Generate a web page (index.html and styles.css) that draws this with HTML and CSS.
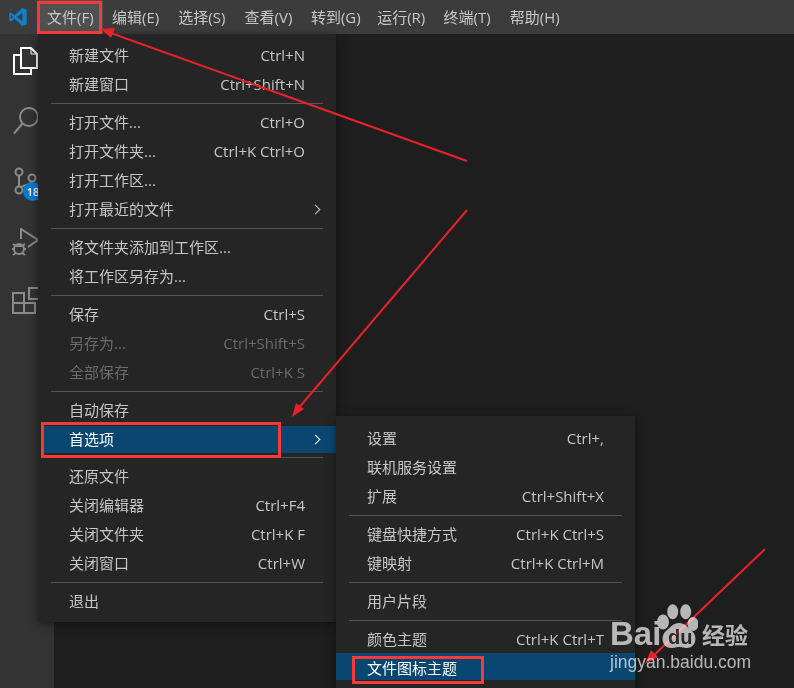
FILE: index.html
```html
<!DOCTYPE html>
<html lang="zh-CN">
<head>
<meta charset="utf-8">
<title>Visual Studio Code</title>
<link rel="stylesheet" href="styles.css">
</head>
<body>
<div class="app">
  <header class="titlebar">
    <svg class="logo" viewBox="0 0 20 20" width="20" height="20"><path fill="#0f7fcc" d="M14.3 1 6.6 8.2 2.9 5.400 1.3 6.200v7.600l1.600.8 3.700-2.800 7.700 7.200 4.400-1.800V2.800zM14.300 6v8L9 10zM3 8l2.300 2L3 12z"/></svg>
    <nav class="menubar">
      <span class="top active">文件(F)</span>
      <span class="top">编辑(E)</span>
      <span class="top">选择(S)</span>
      <span class="top">查看(V)</span>
      <span class="top">转到(G)</span>
      <span class="top">运行(R)</span>
      <span class="top">终端(T)</span>
      <span class="top">帮助(H)</span>
    </nav>
  </header>
  <div class="body">
    <aside class="activity">
      <svg class="act act-files" viewBox="0 0 28 30" width="28" height="30" fill="none" stroke="#fff" stroke-width="2"><path d="M9 8H2v19h17v-6"/><path d="M9 1h10l6 6v14H9z" fill="#333"/><path d="M19 1v6h6" stroke-width="1"/></svg>
      <svg class="act act-search" viewBox="0 0 28 28" width="28" height="28" fill="none" stroke="#8a8a8a" stroke-width="2"><circle cx="17" cy="10" r="9"/><path d="M10.500 16.500 2 26.500"/></svg>
      <div class="act act-scm">
        <svg viewBox="0 0 24 28" width="24" height="28" fill="none" stroke="#8a8a8a" stroke-width="2"><circle cx="5" cy="5" r="3.500"/><circle cx="5" cy="23" r="3.500"/><circle cx="18" cy="11" r="3.500"/><path d="M5 8.500v11M17 15c-1 3-7 3-10 5"/></svg>
        <span class="badge">18</span>
      </div>
      <svg class="act act-run" viewBox="0 0 30 34" width="30" height="34" fill="none" stroke="#8a8a8a" stroke-width="2"><path d="M9 11V1l17 11-10 7"/><circle cx="7" cy="21" r="5"/><path d="M1 16l3 2M13 16l-3 2M0 21h3M14 21h-3M1 27l3-2M13 27l-3-2M3 18h8"/></svg>
      <svg class="act act-ext" viewBox="0 0 30 30" width="30" height="30" fill="none" stroke="#8a8a8a" stroke-width="2"><path d="M1 6h11v20H1zM1 16h22v10H12"/><path d="M17 1h11v11H17z"/></svg>
    </aside>
    <main class="editor"></main>
  </div>

  <div class="menu menu-file">
    <div class="item"><span>新建文件</span><kbd>Ctrl+N</kbd></div>
    <div class="item"><span>新建窗口</span><kbd>Ctrl+Shift+N</kbd></div>
    <hr class="sep">
    <div class="item"><span>打开文件...</span><kbd>Ctrl+O</kbd></div>
    <div class="item"><span>打开文件夹...</span><kbd>Ctrl+K Ctrl+O</kbd></div>
    <div class="item"><span>打开工作区...</span></div>
    <div class="item"><span>打开最近的文件</span><i class="chev"></i></div>
    <hr class="sep">
    <div class="item"><span>将文件夹添加到工作区...</span></div>
    <div class="item"><span>将工作区另存为...</span></div>
    <hr class="sep">
    <div class="item"><span>保存</span><kbd>Ctrl+S</kbd></div>
    <div class="item disabled"><span>另存为...</span><kbd>Ctrl+Shift+S</kbd></div>
    <div class="item disabled"><span>全部保存</span><kbd>Ctrl+K S</kbd></div>
    <hr class="sep">
    <div class="item"><span>自动保存</span></div>
    <div class="item selected"><span>首选项</span><i class="chev"></i></div>
    <hr class="sep">
    <div class="item"><span>还原文件</span></div>
    <div class="item"><span>关闭编辑器</span><kbd>Ctrl+F4</kbd></div>
    <div class="item"><span>关闭文件夹</span><kbd>Ctrl+K F</kbd></div>
    <div class="item"><span>关闭窗口</span><kbd>Ctrl+W</kbd></div>
    <hr class="sep">
    <div class="item"><span>退出</span></div>
  </div>

  <div class="menu menu-sub">
    <div class="item"><span>设置</span><kbd>Ctrl+,</kbd></div>
    <div class="item"><span>联机服务设置</span></div>
    <div class="item"><span>扩展</span><kbd>Ctrl+Shift+X</kbd></div>
    <hr class="sep">
    <div class="item"><span>键盘快捷方式</span><kbd>Ctrl+K Ctrl+S</kbd></div>
    <div class="item"><span>键映射</span><kbd>Ctrl+K Ctrl+M</kbd></div>
    <hr class="sep">
    <div class="item"><span>用户片段</span></div>
    <hr class="sep">
    <div class="item"><span>颜色主题</span><kbd>Ctrl+K Ctrl+T</kbd></div>
    <div class="item selected"><span>文件图标主题</span></div>
  </div>

  <div class="mark mark-file"></div>
  <div class="mark mark-pref"></div>
  <div class="mark mark-sub"></div>

  <svg class="arrows" viewBox="0 0 794 688" width="794" height="688" fill="none" stroke="#e8222a" stroke-width="2">
    <path d="M467 161 108 32"/>
    <path d="M467 210 297 410"/>
    <path d="M765 549 650 659"/>
    <path fill="#e8222a" stroke="none" d="M101 29l14-1-4 10zM292 417l4-14 8 6zM645 664l6-14 7 7z"/>
  </svg>

  <div class="watermark">
    <span class="wm-bai">Bai</span>
    <span class="wm-paw">
      <svg viewBox="0 0 41 45" width="41" height="45" fill="#fff"><ellipse cx="15.700" cy="8.700" rx="5.500" ry="7.500"/><ellipse cx="28.700" cy="8.700" rx="5.500" ry="7.500"/><ellipse cx="6" cy="19" rx="6" ry="7.500"/><ellipse cx="36" cy="21" rx="5.500" ry="7"/><path d="M22 20c6 0 8 4 13 8 6 5 4 17-5 17-4 0-5-1-8-1s-4 1-8 1c-9 0-11-12-5-17 5-4 7-8 13-8z"/></svg>
      <span class="wm-du">du</span>
    </span>
    <span class="wm-cn">经验</span>
    <span class="wm-url">jingyan.baidu.com</span>
  </div>
</div>
</body>
</html>
```
FILE: styles.css
```css
* { box-sizing: border-box; }
html, body { margin: 0; height: 100%; }
body { background: #1e1e1e; overflow: hidden; }
.app {
  position: relative;
  width: 794px;
  height: 688px;
  overflow: hidden;
  display: flex;
  flex-direction: column;
  font-family: "Open Sans", "Noto Sans CJK SC", sans-serif;
  color: #cccccc;
  filter: blur(.3px);
}
.titlebar {
  height: 34px;
  flex: none;
  background: #3c3c3c;
  display: flex;
  align-items: stretch;
}
.logo { margin: 7px 0 0 8px; flex: none; }
.menubar { display: flex; margin-left: 10px; }
.top {
  width: 66.300px;
  padding-left: 9px;
  font-size: 15px;
  line-height: 34px;
  color: #c8c8c8;
  white-space: nowrap;
}
.top.active { background: #505050; width: 65px; }
.body { flex: 1; display: flex; min-height: 0; }
.activity {
  width: 54px;
  flex: none;
  background: #333333;
  display: flex;
  flex-direction: column;
  padding: 13px 0 0 12px;
}
.act { display: block; flex: none; }
.act-search { margin-top: 30px; }
.act-scm { position: relative; margin-top: 32px; margin-left: 2px; width: 24px; height: 28px; }
.act-scm svg { display: block; }
.act-run { margin-top: 33px; }
.act-ext { margin-top: 25px; }
.badge {
  position: absolute;
  left: 9px;
  top: 15px;
  width: 20px;
  height: 19px;
  border-radius: 50%;
  background: #007acc;
  color: #fff;
  font-size: 11px;
  font-weight: 600;
  line-height: 19px;
  text-align: center;
}
.editor { flex: 1; background: #1e1e1e; }

.menu {
  position: absolute;
  background: #252526;
  box-shadow: 0 2px 8px rgba(0, 0, 0, .5);
  font-size: 15px;
}
.menu-file { left: 38px; top: 34px; width: 298px; height: 588px; padding-top: 7px; }
.menu-sub { left: 336px; top: 416px; width: 299px; height: 290px; padding-top: 8px; }
.item {
  height: 29px;
  display: flex;
  align-items: center;
  justify-content: space-between;
  padding: 0 31px 0 31px;
  color: #c6c6c6;
  white-space: nowrap;
}
.item span { line-height: 29px; }
.item kbd { font: inherit; line-height: 29px; }
.disabled { color: #6b6b6b; }
.selected { background: #094771; color: #fff; height: 27px; margin: 1px 0; }
.menu-file .selected { margin-left: 3px; padding-left: 28px; }
.menu-sub .selected { margin-top: -1px; padding-top: 4px; }
.chev {
  width: 7px;
  height: 7px;
  border-top: 1.500px solid currentColor;
  border-right: 1.500px solid currentColor;
  transform: rotate(45deg);
  margin-right: -14px;
}
.sep {
  margin: 4px 13px;
  height: 1px;
  border: 0;
  background: #555555;
}
.mark { position: absolute; border: 3px solid #f53a3a; }
.mark-file { left: 37px; top: 1px; width: 65px; height: 33px; }
.mark-pref { left: 41px; top: 422px; width: 240px; height: 36px; }
.mark-sub { left: 352px; top: 656px; width: 132px; height: 28px; }
.arrows { position: absolute; left: 0; top: 0; }

.watermark {
  position: absolute;
  left: 610px;
  top: 603px;
  width: 184px;
  height: 68px;
  display: grid;
  grid-template-columns: 47px 41px auto;
  grid-template-rows: 45px 23px;
  color: #fff;
  opacity: .68;
  font-family: "Liberation Sans", sans-serif;
}
.wm-bai { font-size: 33px; font-weight: 700; line-height: 45px; padding-top: 8px; }
.wm-paw { position: relative; }
.wm-paw svg { display: block; }
.wm-du {
  position: absolute;
  left: 11px;
  top: 24px;
  color: #2a2a2a;
  font-size: 20px;
  font-weight: 700;
  line-height: 20px;
}
.wm-cn { font-family: "Noto Sans CJK SC", sans-serif; font-size: 23px; font-weight: 700; line-height: 45px; padding: 9px 0 0 4px; }
.wm-url { grid-column: 1 / -1; font-size: 17.500px; line-height: 23px; padding-top: 3px; }
```
